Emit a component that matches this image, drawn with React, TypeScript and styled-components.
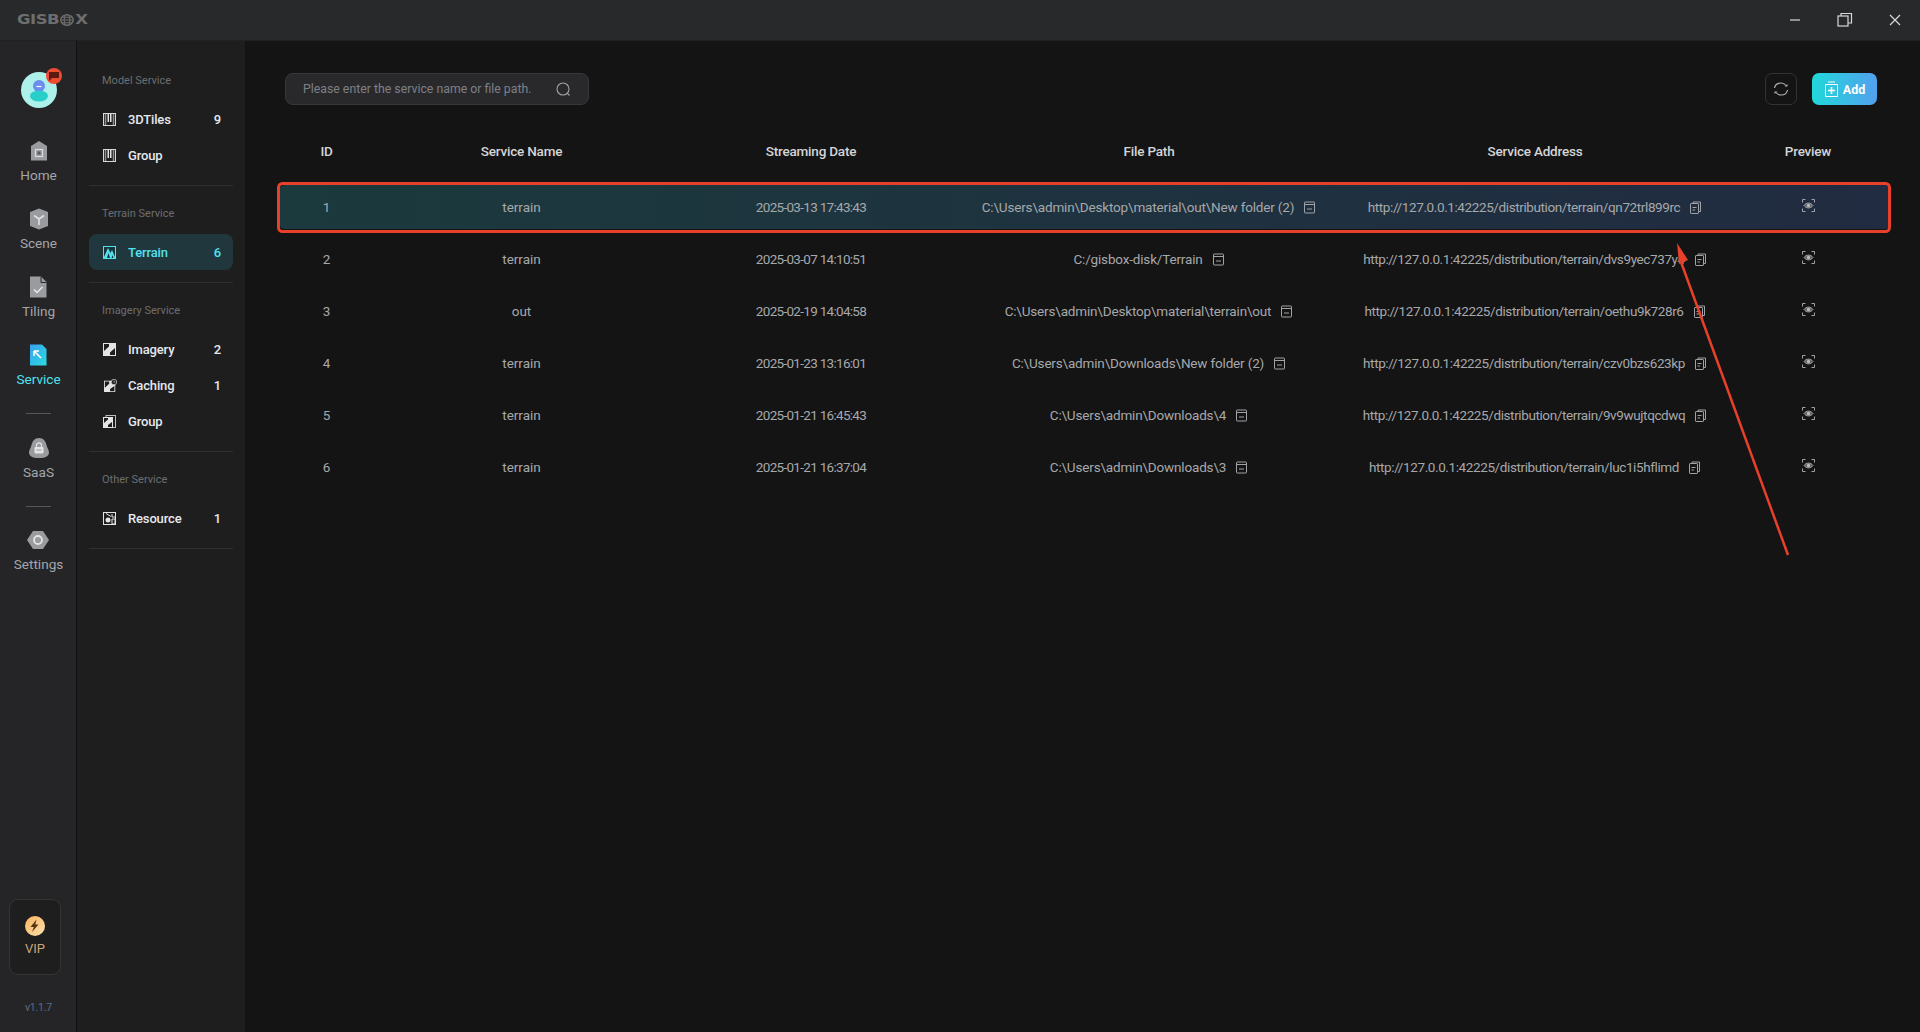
import React from "react";
import styled, { createGlobalStyle } from "styled-components";

const Global = createGlobalStyle`
  html, body { margin: 0; padding: 0; height: 100%; background: #141414; overflow: hidden; }
  #root { height: 100%; }
  * { box-sizing: border-box; }
`;

const FONT = `Roboto, "Liberation Sans", sans-serif`;

const Shell = styled.div`
  position: relative;
  width: 1920px;
  height: 1032px;
  display: flex;
  flex-direction: column;
  font-family: ${FONT};
  background: #141414;
  overflow: hidden;
`;

const TitleBar = styled.header`
  height: 41px;
  flex: none;
  display: flex;
  align-items: center;
  justify-content: space-between;
  background: #28292b;
  border-bottom: 1px solid #202122;
  padding-left: 17px;
`;

const Logo = styled.div`
  display: flex;
  align-items: center;
  color: #6e6e6e;
  font: 900 16.5px/1 "DejaVu Sans", sans-serif;
  letter-spacing: -0.5px;
  transform: scaleY(0.85);
`;

const WinButtons = styled.div`
  display: flex;
  align-items: center;
  gap: 30px;
  padding-right: 15px;
`;

const WinIcon = styled.svg`
  width: 20px;
  height: 20px;
  fill: none;
  stroke: #d8d8d8;
  stroke-width: 1.2;
`;

const Body = styled.div`
  flex: 1;
  display: flex;
  min-height: 0;
`;

const Rail = styled.nav`
  width: 77px;
  flex: none;
  display: flex;
  flex-direction: column;
  align-items: center;
  background: #252528;
  border-right: 1px solid #101010;
  padding: 31px 0 0 1px;
`;

const Avatar = styled.div`
  position: relative;
  width: 36px;
  height: 36px;
  margin-bottom: 31px;
`;

const Badge = styled.span`
  position: absolute;
  top: -4px;
  right: -5px;
  width: 16px;
  height: 16px;
  border-radius: 50%;
  background: #ee4b33;
  display: flex;
  align-items: center;
  justify-content: center;
`;

const RailItem = styled.div<{ $active?: boolean }>`
  height: 68px;
  display: flex;
  flex-direction: column;
  align-items: center;
  color: ${(p) => (p.$active ? "#4fe3ee" : "#a4a6aa")};
  font-size: 13.6px;
  svg { width: 24px; height: 24px; flex: none; }
  span { margin-top: 3px; line-height: 18px; }
`;

const RailDivider = styled.hr<{ $before: number; $after: number }>`
  width: 25px;
  height: 1px;
  flex: none;
  border: 0;
  background: #55565a;
  margin: ${(p) => p.$before}px 0 ${(p) => p.$after}px;
`;

const ShortItem = styled(RailItem)`
  height: 45px;
`;

const Vip = styled.div`
  margin-top: auto;
  margin-right: 7px;
  width: 52px;
  height: 76px;
  border: 1px solid #38332e;
  border-radius: 9px;
  background: #1e1e1e;
  display: flex;
  flex-direction: column;
  align-items: center;
  color: #c8a57c;
  font-size: 13px;
  padding-top: 16px;
  span { margin-top: 3px; line-height: 20px; }
`;

const Version = styled.div`
  margin: 26px 0 17px;
  color: #5f6c80;
  font-size: 10.5px;
  letter-spacing: -0.2px;
  line-height: 14px;
`;

const Side = styled.aside`
  width: 168px;
  flex: none;
  background: #1e1e1e;
  padding: 29px 12px 0;
`;

const Section = styled.section`
  border-bottom: 1px solid #2e2e2e;
  padding-bottom: 12px;
  margin-bottom: 17px;
`;

const SectionTitle = styled.div`
  height: 22px;
  line-height: 22px;
  margin: 0 0 9px 13px;
  font-size: 11px;
  color: #6c6e72;
`;

const SideItem = styled.div<{ $active?: boolean }>`
  height: 36px;
  border-radius: 8px;
  display: flex;
  align-items: center;
  padding: 0 12px 0 14px;
  background: ${(p) => (p.$active ? "#20373e" : "transparent")};
  color: ${(p) => (p.$active ? "#52e2ee" : "#e6e8ee")};
  font-size: 13px;
  letter-spacing: -0.15px;
  font-weight: 500;
  svg { width: 13px; height: 13px; flex: none; margin-right: 12px; }
  b { margin-left: auto; font-weight: 500; }
`;

const Main = styled.main`
  flex: 1;
  min-width: 0;
  padding: 32px 29px 0 34px;
  background: #141414;
`;

const Toolbar = styled.div`
  display: flex;
  align-items: center;
  padding: 0 14px 0 6px;
  margin-bottom: 23px;
`;

const Search = styled.div`
  width: 304px;
  height: 32px;
  display: flex;
  align-items: center;
  justify-content: space-between;
  padding: 0 17px;
  border-radius: 8px;
  background: #29292c;
  border: 1px solid #38383b;
  color: #7d8087;
  font-size: 12.3px;
`;

const Refresh = styled.button`
  margin-left: auto;
  width: 32px;
  height: 32px;
  padding: 0;
  background: transparent;
  border: 1px solid #333;
  border-radius: 7px;
  display: flex;
  align-items: center;
  justify-content: center;
`;

const AddButton = styled.button`
  margin-left: 15px;
  width: 65px;
  height: 32px;
  padding: 0 0 0 1px;
  border: 0;
  border-radius: 7px;
  background: linear-gradient(90deg, #20d8da, #52a0ee);
  color: #fff;
  font: 700 12.5px ${FONT};
  display: flex;
  align-items: center;
  justify-content: center;
  gap: 5px;
`;

const GRID = "95px 295px 284px 392px 380px 166px";

const HeadRow = styled.div`
  display: grid;
  grid-template-columns: ${GRID};
  height: 46px;
  margin-bottom: 11px;
  align-items: center;
  text-align: center;
  color: #d4d5d7;
  font-size: 13.5px;
  letter-spacing: -0.2px;
  font-weight: 500;
`;

const Row = styled.div<{ $active?: boolean }>`
  display: grid;
  grid-template-columns: ${GRID};
  height: 44px;
  margin-bottom: 8px;
  align-items: center;
  text-align: center;
  border-radius: 6px;
  color: #a6a8ab;
  font-size: 13.5px;
  background: ${(p) => (p.$active ? "linear-gradient(90deg, #1b3a3d, #212b41)" : "transparent")};
`;

const DateCell = styled.div`
  letter-spacing: -0.7px;
`;

const CellWithIcon = styled.div<{ $track: number }>`
  display: flex;
  align-items: center;
  justify-content: center;
  gap: 9px;
  white-space: nowrap;
  letter-spacing: ${(p) => p.$track}px;
  svg { flex: none; width: 13px; height: 13px; }
`;

const PreviewCell = styled.div`
  display: flex;
  justify-content: center;
  margin-top: -4px;
  svg { width: 13px; height: 13px; }
`;

const Overlay = styled.svg`
  position: absolute;
  left: 0;
  top: 0;
  width: 1920px;
  height: 1032px;
  pointer-events: none;
  fill: none;
`;

const grey = "#9a9b9e";

const HomeIcon = () => (
  <svg viewBox="0 0 24 24">
    <path d="M12 2l8 5v14.500H4V7z" fill={grey} />
    <rect x="8.500" y="10.500" width="7" height="7" fill="none" stroke="#dcdcdc" strokeWidth="1.200" />
    <rect x="10.500" y="12.500" width="3" height="3" fill="#5a5a5c" />
  </svg>
);
const SceneIcon = () => (
  <svg viewBox="0 0 24 24">
    <path d="M12 1.500l9 3.500v14l-9 3.500-9-3.500V5z" fill={grey} />
    <path d="M7 8.500l5 3.500 5-3.500M12 12v6" stroke="#e0e0e0" strokeWidth="1.600" fill="none" />
  </svg>
);
const TilingIcon = () => (
  <svg viewBox="0 0 24 24">
    <path d="M4 1.500h11l5.500 5.500v15.500H4z" fill={grey} />
    <path d="M15 1.500v6h5.500" fill="none" stroke="#2a2a2c" strokeWidth="1" />
    <path d="M8 14.500l3 3 5.500-5.500" stroke="#e8e8e8" strokeWidth="1.500" fill="none" />
  </svg>
);
const ServiceIcon = () => (
  <svg viewBox="0 0 24 24">
    <defs>
      <linearGradient id="svc" x1="0" y1="0" x2="1" y2="1">
        <stop offset="0" stopColor="#3aa0f0" />
        <stop offset="1" stopColor="#28dce0" />
      </linearGradient>
    </defs>
    <path d="M4 1.500h12l4.500 4.500v16.500H4z" fill="url(#svc)" />
    <path d="M8 8h5M8 8v5M8 8l7 7" stroke="#fff" strokeWidth="1.600" fill="none" />
  </svg>
);
const SaasIcon = () => (
  <svg viewBox="0 0 24 24">
    <path d="M12 2c4.500 0 6.500 3 7.500 7 .8 3.200 2.500 5 2.500 7.500 0 3.500-3 5.500-10 5.500S2 20 2 16.500C2 14 3.700 12.200 4.500 9c1-4 3-7 7.500-7z" fill={grey} />
    <rect x="7.500" y="11" width="9" height="6.500" rx="1" fill="#e4e4e4" />
    <path d="M9.500 11V9.300a2.500 2.500 0 015 0V11" stroke="#e4e4e4" strokeWidth="1.200" fill="none" />
    <rect x="9.500" y="13.500" width="5" height="1" fill={grey} />
  </svg>
);
const SettingsIcon = () => (
  <svg viewBox="0 0 24 24">
    <path d="M7 3h10l6 9-6 9H7l-6-9z" fill={grey} />
    <circle cx="12" cy="12" r="4" fill="none" stroke="#e4e4e4" strokeWidth="1.800" />
  </svg>
);
const Bolt = () => (
  <svg width="20" height="20" viewBox="0 0 20 20" style={{ flex: "none" }}>
    <defs>
      <linearGradient id="vip" x1="0" y1="0" x2="1" y2="1">
        <stop offset="0" stopColor="#f6b55e" />
        <stop offset="1" stopColor="#ffe0b0" />
      </linearGradient>
    </defs>
    <circle cx="10" cy="10" r="10" fill="url(#vip)" />
    <path d="M11.500 3.500L5.500 11h3.300L7 16l6.500-7.500h-3.200z" fill="#5a3410" />
  </svg>
);

const TilesIcon = () => (
  <svg viewBox="0 0 13 13">
    <rect x=".5" y=".5" width="12" height="12" fill="none" stroke="#d8d8d8" />
    <path d="M2.500 1v11M10.500 1v11" stroke="#8f8f8f" strokeWidth="1.500" />
    <path d="M4.500 1v8h1.500V1zM7 1v8h1.500V1z" fill="#e4e4e4" />
  </svg>
);
const TerrainIcon = () => (
  <svg viewBox="0 0 13 13">
    <rect width="13" height="13" fill="#4fe3ee" />
    <path d="M1 1h11v10L9 4 7.500 7 5 2 1 11z" fill="#17363c" />
    <path d="M4 12l1.500-5 1.500 5zM8.500 12l1-3 1 3z" fill="#17363c" />
  </svg>
);
const ImageryIcon = () => (
  <svg viewBox="0 0 13 13">
    <rect width="13" height="13" fill="#e4e4e4" />
    <path d="M1 8l5-4.500V1H1zM12 5L7 9.500V12h5z" fill="#1e1e1e" />
  </svg>
);
const CachingIcon = () => (
  <svg viewBox="0 0 15 15" style={{ width: 15, marginRight: 10 }}>
    <rect y="2" width="13" height="13" fill="#e4e4e4" />
    <path d="M1 10l5-4.500V3H1zM12 8L7 11.500V14h5z" fill="#1e1e1e" />
    <circle cx="11.500" cy="3.500" r="3.200" fill="#1e1e1e" stroke="#e4e4e4" strokeWidth=".8" />
    <path d="M11.500 2v1.700h1.300" stroke="#e4e4e4" strokeWidth=".7" fill="none" />
  </svg>
);
const ImageryGroupIcon = () => (
  <svg viewBox="0 0 13 13">
    <rect x="3" y=".5" width="9.500" height="12" fill="none" stroke="#bcbcbc" />
    <rect y="2" width="10" height="11" fill="#e4e4e4" />
    <path d="M1 8l4-3.500V3H1zM9 7L5 10v2h4z" fill="#1e1e1e" />
  </svg>
);
const ResourceIcon = () => (
  <svg viewBox="0 0 13 13">
    <rect x=".5" y=".5" width="12" height="12" fill="none" stroke="#e4e4e4" />
    <circle cx="5" cy="8" r="2.500" fill="#e4e4e4" />
    <path d="M3 1.500l5 3M9 2v3h3M9 7h3v5H9z" stroke="#e4e4e4" fill="none" />
  </svg>
);
const SearchIcon = () => (
  <svg width="15" height="15" viewBox="0 0 15 15" fill="none" stroke="#a0a2a6" strokeWidth="1.100">
    <circle cx="7" cy="7" r="6" />
    <path d="M11.500 11.500l2 2" />
  </svg>
);
const FileIcon = () => (
  <svg viewBox="0 0 13 13" fill="none" stroke="#a0a2a6" strokeWidth="1">
    <rect x="1.500" y="1" width="10" height="11" rx=".6" />
    <path d="M1.500 3.500h10M4 8h5" />
  </svg>
);
const CopyIcon = () => (
  <svg viewBox="0 0 13 13" fill="none" stroke="#a0a2a6" strokeWidth="1">
    <rect x="1.500" y="2.500" width="8" height="10" rx=".6" />
    <path d="M4 2.500v-1.500h7.500v9.500h-2M3.500 6.500h4M3.500 9h2.500" />
  </svg>
);
const PreviewIcon = () => (
  <svg viewBox="0 0 13 13" fill="none" stroke="#a0a2a6" strokeWidth="1">
    <path d="M.5 3.500v-3h3M9.500.5h3v3M12.500 9.500v3h-3M3.500 12.500h-3v-3" />
    <path d="M2 6.500c2.400-3.200 6.600-3.200 9 0-2.400 3.200-6.600 3.200-9 0z" fill="#5c5e62" />
    <circle cx="6.500" cy="6.500" r="1.700" fill="#b8babe" stroke="none" />
  </svg>
);
const RefreshIcon = () => (
  <svg width="16" height="16" viewBox="0 0 16 16" fill="none" stroke="#b2b2b2" strokeWidth="1.200">
    <path d="M1.500 7C2 4 4.500 2 8 2c2.200 0 3.700.8 5 2.500" />
    <path d="M14.500 9c-.5 3-3 5-6.500 5-2.200 0-3.700-.8-5-2.500" />
    <path d="M11.500 5.500h3v-2.500zM4.500 10.500h-3v2.500z" fill="#b2b2b2" stroke="none" />
  </svg>
);
const AddIcon = () => (
  <svg width="13" height="16" viewBox="0 0 13 16" fill="none" stroke="#fff" strokeWidth="1">
    <path d="M.5 3.500h12v12H.500z" />
    <path d="M3 1h7" />
    <path d="M6.500 6v7M3 9.500h7" strokeWidth="1.600" />
  </svg>
);
const GlobeIcon = () => (
  <svg width="14" height="14" viewBox="0 0 13 13" fill="none" stroke="#6e6e6e" strokeWidth="1" style={{ margin: "0 1px" }}>
    <circle cx="6.500" cy="6.500" r="5.800" strokeWidth="1.300" />
    <ellipse cx="6.500" cy="6.500" rx="2.600" ry="5.800" />
    <path d="M1 6.500h11M2 3.500h9M2 9.500h9" />
  </svg>
);

const rows = [
  ["1", "terrain", "2025-03-13 17:43:43", "C:\\Users\\admin\\Desktop\\material\\out\\New folder (2)", "qn72trl899rc"],
  ["2", "terrain", "2025-03-07 14:10:51", "C:/gisbox-disk/Terrain", "dvs9yec737y4"],
  ["3", "out", "2025-02-19 14:04:58", "C:\\Users\\admin\\Desktop\\material\\terrain\\out", "oethu9k728r6"],
  ["4", "terrain", "2025-01-23 13:16:01", "C:\\Users\\admin\\Downloads\\New folder (2)", "czv0bzs623kp"],
  ["5", "terrain", "2025-01-21 16:45:43", "C:\\Users\\admin\\Downloads\\4", "9v9wujtqcdwq"],
  ["6", "terrain", "2025-01-21 16:37:04", "C:\\Users\\admin\\Downloads\\3", "luc1i5hflimd"],
];

export default function App() {
  return (
    <Shell>
      <Global />
      <TitleBar>
        <Logo>
          GISB
          <GlobeIcon />
          X
        </Logo>
        <WinButtons>
          <WinIcon viewBox="0 0 20 20"><path d="M5 10h10" /></WinIcon>
          <WinIcon viewBox="0 0 20 20"><rect x="3" y="6" width="10" height="10" /><path d="M6 6V3.500h10.500V13H13" /></WinIcon>
          <WinIcon viewBox="0 0 20 20"><path d="M5 5l10 10M15 5L5 15" /></WinIcon>
        </WinButtons>
      </TitleBar>
      <Body>
        <Rail>
          <Avatar>
            <svg width="36" height="36" viewBox="0 0 36 36">
              <circle cx="18" cy="18" r="18" fill="#aef0ea" />
              <circle cx="18" cy="14" r="6" fill="#6a8df0" />
              <path d="M15.500 14.500h5" stroke="#fff" strokeWidth="1.200" />
              <ellipse cx="18" cy="24" rx="9" ry="5.500" fill="#28cfc8" />
            </svg>
            <Badge>
              <svg width="10" height="9" viewBox="0 0 10 9"><path d="M0 0h10v6H3L0 9z" fill="#5c1a12" /></svg>
            </Badge>
          </Avatar>
          <RailItem><HomeIcon /><span>Home</span></RailItem>
          <RailItem><SceneIcon /><span>Scene</span></RailItem>
          <RailItem><TilingIcon /><span>Tiling</span></RailItem>
          <ShortItem $active><ServiceIcon /><span>Service</span></ShortItem>
          <RailDivider $before={25} $after={22} />
          <ShortItem><SaasIcon /><span>SaaS</span></ShortItem>
          <RailDivider $before={25} $after={21} />
          <ShortItem><SettingsIcon /><span>Settings</span></ShortItem>
          <Vip><Bolt /><span>VIP</span></Vip>
          <Version>v1.1.7</Version>
        </Rail>
        <Side>
          <Section>
            <SectionTitle>Model Service</SectionTitle>
            <SideItem><TilesIcon />3DTiles<b>9</b></SideItem>
            <SideItem><TilesIcon />Group</SideItem>
          </Section>
          <Section>
            <SectionTitle>Terrain Service</SectionTitle>
            <SideItem $active><TerrainIcon />Terrain<b>6</b></SideItem>
          </Section>
          <Section>
            <SectionTitle>Imagery Service</SectionTitle>
            <SideItem><ImageryIcon />Imagery<b>2</b></SideItem>
            <SideItem><CachingIcon />Caching<b>1</b></SideItem>
            <SideItem><ImageryGroupIcon />Group</SideItem>
          </Section>
          <Section>
            <SectionTitle>Other Service</SectionTitle>
            <SideItem><ResourceIcon />Resource<b>1</b></SideItem>
          </Section>
        </Side>
        <Main>
          <Toolbar>
            <Search>
              <span>Please enter the service name or file path.</span>
              <SearchIcon />
            </Search>
            <Refresh aria-label="Refresh"><RefreshIcon /></Refresh>
            <AddButton><AddIcon />Add</AddButton>
          </Toolbar>
          <HeadRow>
            <div>ID</div>
            <div>Service Name</div>
            <div>Streaming Date</div>
            <div>File Path</div>
            <div>Service Address</div>
            <div>Preview</div>
          </HeadRow>
          {rows.map((r, i) => (
            <Row key={r[0]} $active={i === 0}>
              <div>{r[0]}</div>
              <div>{r[1]}</div>
              <DateCell>{r[2]}</DateCell>
              <CellWithIcon $track={-0.17}>{r[3]}<FileIcon /></CellWithIcon>
              <CellWithIcon $track={-0.39}>{`http://127.0.0.1:42225/distribution/terrain/${r[4]}`}<CopyIcon /></CellWithIcon>
              <PreviewCell><PreviewIcon /></PreviewCell>
            </Row>
          ))}
        </Main>
      </Body>
      <Overlay viewBox="0 0 1920 1032">
        <rect x="278.500" y="183.500" width="1611" height="48" rx="4" stroke="#e8402a" strokeWidth="3" />
        <path d="M1788 555L1681 262" stroke="#e8402a" strokeWidth="2.500" />
        <path d="M1677 243l11 17-9 4z" fill="#e8402a" />
      </Overlay>
    </Shell>
  );
}
